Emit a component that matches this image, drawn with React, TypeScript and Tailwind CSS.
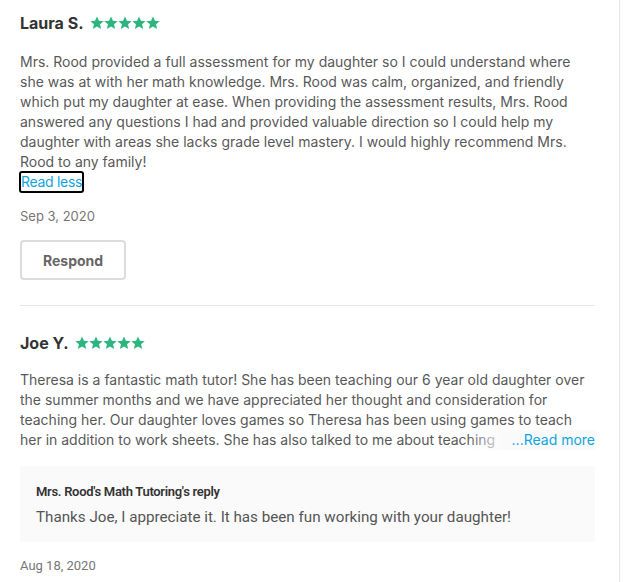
import React from "react";

const Star = () => (
  <svg width="14" height="14" viewBox="0 0 24 24" className="shrink-0">
    <path
      d="M12 .8l3.3 7.4 8.1.7-6.2 5.3 1.9 7.9L12 17.9l-7.1 4.2 1.9-7.9L.6 8.9l8.1-.7z"
      fill="#2db580"
    />
  </svg>
);

const Stars = () => (
  <div className="flex items-center">
    <Star />
    <Star />
    <Star />
    <Star />
    <Star />
  </div>
);

const main = { fontFamily: "Inter, 'Noto Sans', sans-serif" };
const alt = { fontFamily: "Roboto, 'Noto Sans', sans-serif" };

const Line = ({ children }: { children: React.ReactNode }) => (
  <span className="block whitespace-nowrap">{children}</span>
);

export default function App() {
  return (
    <div className="w-[627px] h-[582px] bg-white overflow-hidden" style={main}>
      <div className="w-[620px] h-full border-r border-[#e6e6e6] pl-5 pr-6">
        {/* Review 1 */}
        <div className="pt-[12px]">
          <div className="flex items-center gap-[6px] h-[22px]">
            <span className="text-[16px] font-bold text-[#333]">Laura S.</span>
            <Stars />
          </div>
          <div className="mt-[18px] text-[14px] leading-[20px] text-[#595959]">
            <Line>Mrs. Rood provided a full assessment for my daughter so I could understand where</Line>
            <Line>she was at with her math knowledge. Mrs. Rood was calm, organized, and friendly</Line>
            <Line>which put my daughter at ease. When providing the assessment results, Mrs. Rood</Line>
            <Line>answered any questions I had and provided valuable direction so I could help my</Line>
            <Line>daughter with areas she lacks grade level mastery. I would highly recommend Mrs.</Line>
            <Line>Rood to any family!</Line>
          </div>
          <div className="h-[20px] flex items-center">
            <span className="inline-block text-[14px] leading-[18px] tracking-[-0.3px] text-[#0ea5e0] border-2 border-black rounded-[3px] -ml-px">
              Read less
            </span>
          </div>
          <div className="mt-[16px] text-[13px] text-[#767676] leading-[16px]">Sep 3, 2020</div>
          <button className="mt-[16px] w-[106px] h-[40px] border-2 border-[#dcdcdc] rounded-[4px] text-[14px] font-bold text-[#676767] bg-white">
            Respond
          </button>
        </div>
        <div className="mt-[25px] h-px bg-[#e8e8e8]" />
        {/* Review 2 */}
        <div className="pt-[26px]">
          <div className="flex items-center gap-[6px] h-[22px]">
            <span className="text-[16px] font-bold text-[#333]">Joe Y.</span>
            <Stars />
          </div>
          <div className="relative mt-[16px] text-[14px] leading-[20px] text-[#595959]">
            <Line>Theresa is a fantastic math tutor! She has been teaching our 6 year old daughter over</Line>
            <Line>the summer months and we have appreciated her thought and consideration for</Line>
            <Line>teaching her. Our daughter loves games so Theresa has been using games to teach</Line>
            <Line>her in addition to work sheets. She has also talked to me about teaching</Line>
            <div className="absolute right-0 bottom-0 h-[20px] flex">
              <div className="w-[40px] bg-gradient-to-r from-transparent to-[#fafafa]" />
              <span className="bg-[#fafafa] text-[#0ea5e0] pl-1">...Read more</span>
            </div>
          </div>
          <div className="mt-[16px] bg-[#fafafa] px-4 pt-[17px] pb-[15px]" style={alt}>
            <div className="text-[13px] font-semibold tracking-[-0.3px] text-[#333] leading-[18px]">
              Mrs. Rood's Math Tutoring's reply
            </div>
            <div className="mt-[6px] text-[15.2px] text-[#555] leading-[20px]">
              Thanks Joe, I appreciate it. It has been fun working with your daughter!
            </div>
          </div>
          <div className="mt-[16px] text-[13px] text-[#767676] leading-[16px]" style={alt}>
            Aug 18, 2020
          </div>
        </div>
      </div>
    </div>
  );
}
